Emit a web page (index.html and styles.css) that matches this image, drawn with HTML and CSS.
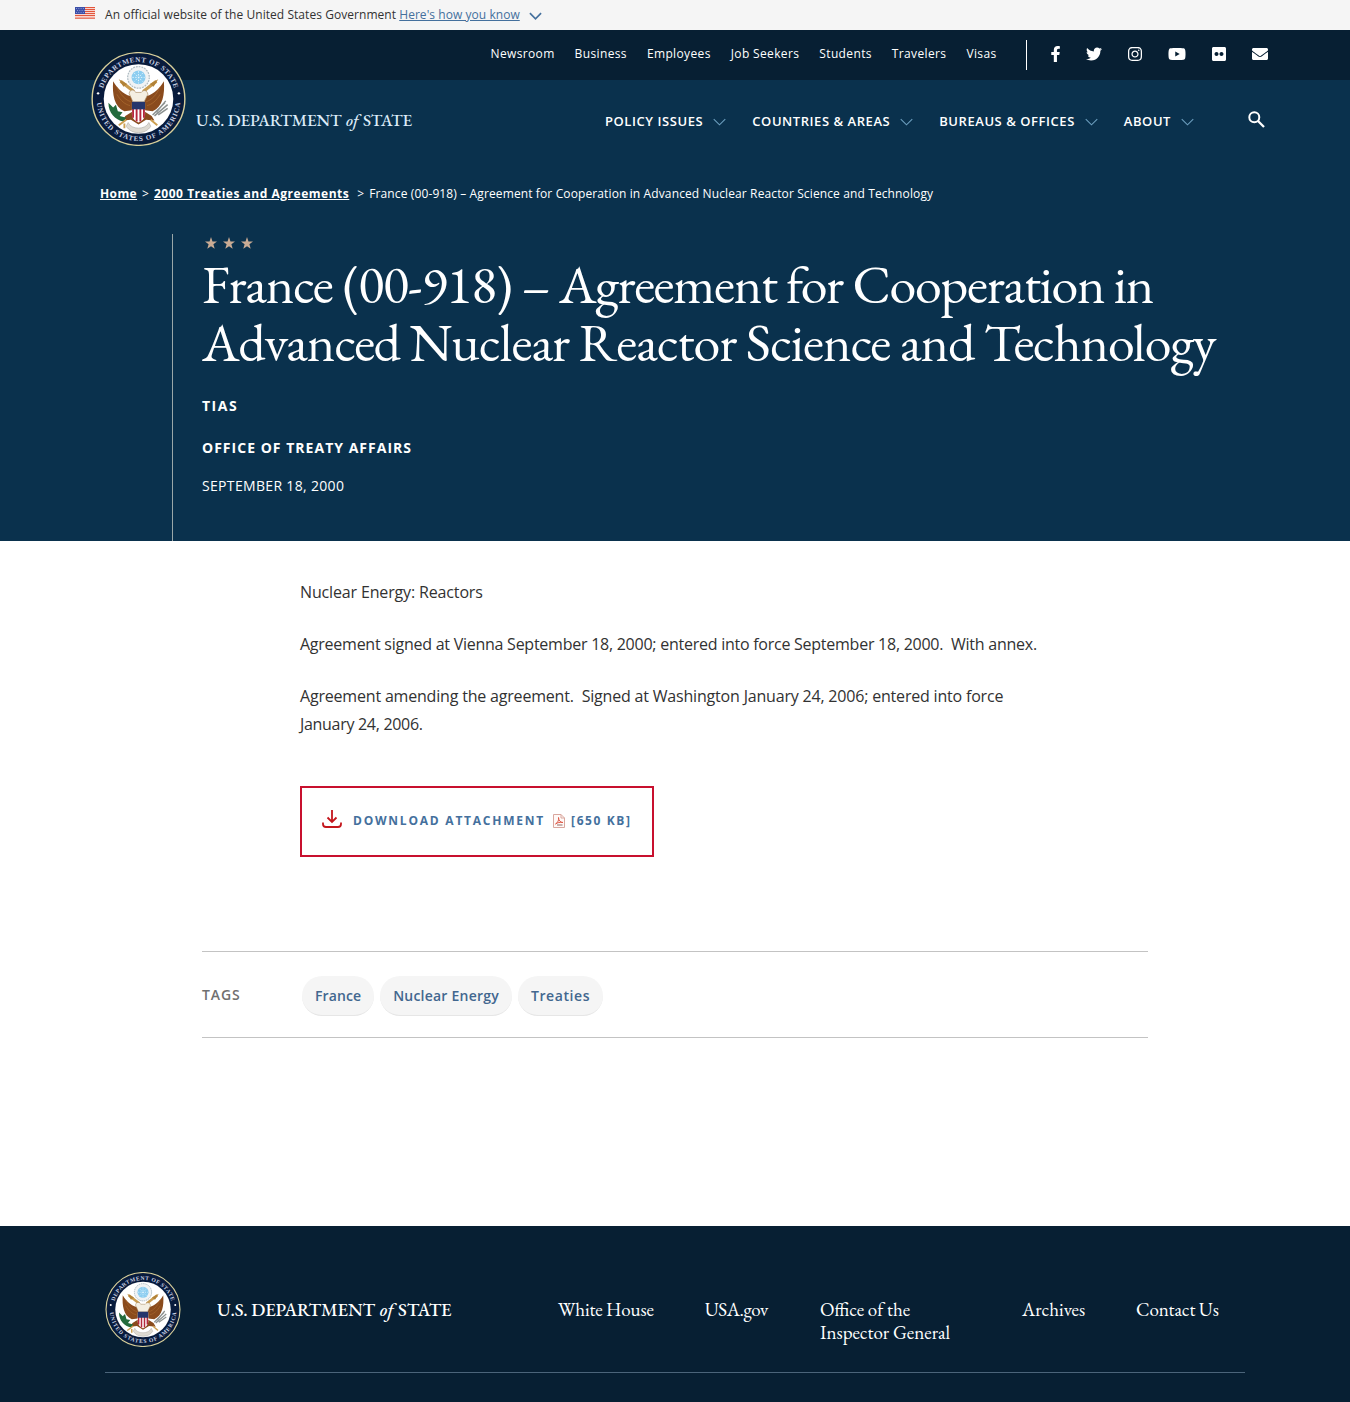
FILE: index.html
```html
<!DOCTYPE html>
<html lang="en">
<head>
<meta charset="utf-8">
<title>France (00-918) – Agreement for Cooperation in Advanced Nuclear Reactor Science and Technology</title>
<link rel="stylesheet" href="styles.css">
</head>
<body>
<svg class="sprite" aria-hidden="true">
  <defs>
    <path id="arc-top" d="M10.600 50A39.4 39.4 0 0 1 89.400 50"/>
    <path id="arc-bottom" d="M5.400 50A44.600 44.600 0 0 0 94.600 50"/>
    <symbol id="seal" viewBox="0 0 100 100">
      <circle cx="50" cy="50" r="49.3" fill="#081b3c" stroke="#d8cf9a" stroke-width="1.5"/>
      <circle cx="50" cy="50" r="37" fill="#fff"/>
      <text class="seal-text"><textPath href="#arc-top" startOffset="50%" text-anchor="middle" textLength="101">DEPARTMENT OF STATE</textPath></text>
      <text class="seal-text"><textPath href="#arc-bottom" startOffset="50%" text-anchor="middle" textLength="132">UNITED STATES OF AMERICA</textPath></text>
      <circle cx="7" cy="44" r="1.3" fill="#fff"/><circle cx="93" cy="44" r="1.3" fill="#fff"/>
      <circle cx="50" cy="27" r="11.5" fill="#f1f3f4" stroke="#aebbc2" stroke-width="1.3" stroke-dasharray="2 1"/>
      <circle cx="50" cy="27" r="7.4" fill="#8ccdf0"/>
      <path d="M50 20.500v13M43.500 27h13M45.500 22.500l9 9M54.500 22.500l-9 9" stroke="#e5f5fd" stroke-width="1" stroke-dasharray="1.500 1.500"/>
      <path d="M31 31l14 11M69 31L55 42" stroke="#c99c4f" stroke-width="3.400"/>
      <path d="M29 29l9 5-4 3zM71 29l-9 5 4 3z" fill="#b18238"/>
      <path d="M23 31C22 45 24 58 35 63l8-1 1-15c-7 0-16-7-21-16zM77 31c1 14 -1 27-12 32l-8-1-1-15c7 0 16-7 21-16z" fill="#8a4b1d"/>
      <path d="M27 37c4 9 9 14 15 16M27 45c4 7 9 11 14 12M73 37c-4 9-9 14-15 16M73 45c-4 7-9 11-14 12" fill="none" stroke="#a9692f" stroke-width=".8"/>
      <path d="M40 44c1-5 6-4 7-1h6c2-3 6-3 7 2l-4 8H44z" fill="#f4efe2" stroke="#a88b62" stroke-width=".7"/>
      <path d="M36 68l8-5h12l8 5 3 5-9-1-8 5-8-5-9 1z" fill="#8a4b1d"/>
      <path d="M18 54l5 5 3-3 2 7 5 1-3 4 7 2-3 4c-9-2-16-9-16-20z" fill="#236b3c"/>
      <path d="M65 67l13-13m-11 14l14-12m-12 8l10-12m-8 15l10-7" stroke="#8c9190" stroke-width="1.600"/>
      <path d="M37 72l-8 6M63 72l7 6M35 76v5" stroke="#cda052" stroke-width="2"/>
      <path d="M39 75c3 8 19 8 22 0l2 4c-5 9-21 9-26 0z" fill="#dedad2" stroke="#aaa69e" stroke-width=".6"/>
      <path d="M43 54h14v12c0 5-4 8-7 9-3-1-7-4-7-9z" fill="#fff"/>
      <path d="M44.200 60v10M48 60v14M52 60v14M55.800 60v10" stroke="#b5283c" stroke-width="2"/>
      <path d="M43 53h14v8H43z" fill="#25366c"/>
    </symbol>
    <symbol id="chevron" viewBox="0 0 14 8"><path d="M.8.8L7 7 13.200.8" fill="none" stroke="currentColor" stroke-width="1.200"/></symbol>
    <symbol id="star" viewBox="0 0 24 24"><path d="M12 0l3 8.800 9 .1-7.200 5.600 2.600 9.100L12 18.300 4.600 23.600l2.600-9.100L0 8.900l9-.1z" fill="currentColor"/></symbol>
  </defs>
</svg>

<div class="banner">
  <svg class="flag" viewBox="0 0 20 12">
    <path fill="#fff" d="M0 0h20v12H0z"/>
    <path d="M0 .5h20M0 2.500h20M0 4.500h20M0 6.500h20M0 8.500h20M0 11.200h20" stroke="#e2563c" stroke-width="1.250"/>
    <path fill="#3c4fa8" d="M0 0h10v7H0z"/>
    <path d="M1 1.500h9M2 3.500h8M1 5.500h9" stroke="#a9b3e4" stroke-width=".7" stroke-dasharray="1 1.300"/>
  </svg>
  <span class="banner-text">An official website of the United States Government <a href="#">Here's how you know</a></span>
  <svg class="banner-chevron" viewBox="0 0 14 8"><path d="M1 1l6 6 6-6" fill="none" stroke="#44709d" stroke-width="1.800"/></svg>
</div>

<header class="header">
  <div class="topbar">
    <nav class="topnav">
      <a href="#">Newsroom</a><a href="#">Business</a><a href="#">Employees</a><a href="#">Job Seekers</a><a href="#">Students</a><a href="#">Travelers</a><a href="#">Visas</a>
    </nav>
    <div class="social">
      <svg width="9" height="16" viewBox="22 0 272 512"><path d="M279.140 288l14.220-92.660h-88.910v-60.130c0-25.350 12.420-50.060 52.240-50.060h40.420V6.260S260.430 0 225.360 0c-73.220 0-121.080 44.380-121.080 124.720v70.620H22.890V288h81.390v224h100.170V288z"/></svg>
      <svg width="16" height="16" viewBox="0 0 512 512"><path d="M459.370 151.716c.325 4.548.325 9.097.325 13.645 0 138.720-105.583 298.558-298.558 298.558-59.452 0-114.680-17.219-161.137-47.106 8.447.974 16.568 1.299 25.340 1.299 49.055 0 94.213-16.568 130.274-44.832-46.132-.975-84.792-31.188-98.112-72.772 6.498.974 12.995 1.624 19.818 1.624 9.421 0 18.843-1.300 27.614-3.573-48.081-9.747-84.143-51.980-84.143-102.985v-1.299c13.969 7.797 30.214 12.670 47.431 13.319-28.264-18.843-46.781-51.005-46.781-87.391 0-19.492 5.197-37.360 14.294-52.954 51.655 63.675 129.300 105.258 216.365 109.807-1.624-7.797-2.599-15.918-2.599-24.040 0-57.828 46.782-104.934 104.934-104.934 30.213 0 57.502 12.670 76.670 33.137 23.715-4.548 46.456-13.320 66.599-25.340-7.798 24.366-24.366 44.833-46.132 57.827 21.117-2.273 41.584-8.122 60.426-16.243-14.292 20.791-32.161 39.308-52.628 54.253z"/></svg>
      <svg width="14" height="16" viewBox="0 0 448 512"><path d="M224.100 141c-63.600 0-114.900 51.300-114.900 114.900s51.300 114.900 114.900 114.900S339 319.500 339 255.900 287.700 141 224.100 141zm0 189.600c-41.100 0-74.700-33.500-74.700-74.700s33.500-74.700 74.700-74.700 74.700 33.500 74.700 74.700-33.600 74.700-74.700 74.700zm146.400-194.300c0 14.900-12 26.800-26.800 26.800-14.900 0-26.800-12-26.800-26.800s12-26.800 26.800-26.800 26.800 12 26.800 26.800zm76.100 27.200c-1.700-35.900-9.900-67.700-36.200-93.900-26.200-26.200-58-34.400-93.900-36.200-37-2.100-147.900-2.100-184.900 0-35.800 1.700-67.600 9.900-93.900 36.100s-34.400 58-36.200 93.900c-2.100 37-2.100 147.900 0 184.900 1.700 35.900 9.900 67.700 36.200 93.900s58 34.400 93.900 36.200c37 2.100 147.900 2.100 184.900 0 35.900-1.700 67.700-9.900 93.900-36.200 26.200-26.200 34.400-58 36.200-93.900 2.100-37 2.100-147.800 0-184.800zM398.800 388c-7.800 19.600-22.900 34.700-42.600 42.600-29.500 11.700-99.500 9-132.100 9s-102.700 2.600-132.100-9c-19.600-7.800-34.700-22.900-42.600-42.600-11.700-29.500-9-99.500-9-132.100s-2.600-102.700 9-132.100c7.800-19.600 22.900-34.700 42.600-42.600 29.500-11.700 99.500-9 132.100-9s102.700-2.600 132.100 9c19.600 7.800 34.700 22.900 42.600 42.600 11.700 29.500 9 99.500 9 132.100s2.700 102.700-9 132.100z"/></svg>
      <svg width="18" height="16" viewBox="0 0 576 512"><path d="M549.655 124.083c-6.281-23.650-24.787-42.276-48.284-48.597C458.781 64 288 64 288 64S117.220 64 74.629 75.486c-23.497 6.322-42.003 24.947-48.284 48.597-11.412 42.867-11.412 132.305-11.412 132.305s0 89.438 11.412 132.305c6.281 23.650 24.787 41.500 48.284 47.821C117.220 448 288 448 288 448s170.780 0 213.371-11.486c23.497-6.321 42.003-24.171 48.284-47.821 11.412-42.867 11.412-132.305 11.412-132.305s0-89.438-11.412-132.305zm-317.510 213.508V175.185l142.739 81.205-142.739 81.201z"/></svg>
      <svg width="14" height="16" viewBox="0 0 448 512"><path d="M400 32H48C21.500 32 0 53.500 0 80v352c0 26.500 21.500 48 48 48h352c26.500 0 48-21.500 48-48V80c0-26.500-21.500-48-48-48zM144.500 319c-35.100 0-63.500-28.400-63.500-63.500s28.400-63.500 63.500-63.500 63.500 28.400 63.500 63.500-28.400 63.500-63.500 63.500zm159 0c-35.100 0-63.500-28.400-63.500-63.500s28.400-63.500 63.500-63.500 63.500 28.400 63.500 63.500-28.400 63.500-63.500 63.500z"/></svg>
      <svg width="16" height="16" viewBox="0 0 512 512"><path d="M502.300 190.800c3.900-3.100 9.700-.2 9.700 4.700V400c0 26.500-21.500 48-48 48H48c-26.500 0-48-21.500-48-48V195.600c0-5 5.700-7.800 9.700-4.700 22.400 17.400 52.100 39.500 154.100 113.600 21.100 15.400 56.700 47.800 92.200 47.600 35.700.3 72-32.800 92.300-47.600 102-74.100 131.600-96.300 154-113.700zM256 320c23.200.4 56.600-29.200 73.400-41.400 132.700-96.300 142.800-104.700 173.400-128.700 5.800-4.500 9.200-11.500 9.200-18.900v-19c0-26.500-21.500-48-48-48H48c-26.500 0-48 21.500-48 48v19c0 7.400 3.400 14.300 9.200 18.900 30.600 23.900 40.700 32.400 173.400 128.700 16.800 12.200 50.200 41.800 73.400 41.400z"/></svg>
    </div>
  </div>

  <div class="mainbar">
    <a class="logo" href="#">
      <svg class="logo-seal"><use href="#seal"/></svg>
      <span class="wordmark">U.S. DEPARTMENT <i>of</i> STATE</span>
    </a>
    <nav class="mainnav">
      <a class="nav-policy" href="#">POLICY ISSUES <svg><use href="#chevron"/></svg></a>
      <a href="#">COUNTRIES &amp; AREAS <svg><use href="#chevron"/></svg></a>
      <a href="#">BUREAUS &amp; OFFICES <svg><use href="#chevron"/></svg></a>
      <a href="#">ABOUT <svg><use href="#chevron"/></svg></a>
    </nav>
    <svg class="search" viewBox="0 0 17 17"><circle cx="6.300" cy="6.300" r="5" fill="none" stroke="#fff" stroke-width="2"/><path d="M10 10l6 6" stroke="#fff" stroke-width="2.300"/></svg>
  </div>

  <div class="breadcrumb">
    <a class="crumb-home" href="#">Home</a><span class="sep">&gt;</span><a class="crumb-parent" href="#">2000 Treaties and Agreements</a><span class="sep sep-last">&gt;</span><span class="crumb-current">France (00-918) – Agreement for Cooperation in Advanced Nuclear Reactor Science and Technology</span>
  </div>

  <div class="hero">
    <div class="stars"><svg><use href="#star"/></svg><svg><use href="#star"/></svg><svg><use href="#star"/></svg></div>
    <h1><span class="line-a">France (00-918) <span class="title-rest">– Agreement for Cooperation in</span></span> <span class="line-b">Advanced Nuclear Reactor Science and Technology</span></h1>
    <p class="kind">TIAS</p>
    <p class="office">OFFICE OF TREATY AFFAIRS</p>
    <p class="date">SEPTEMBER 18, 2000</p>
  </div>
</header>

<main>
  <article class="entry">
    <p class="subject">Nuclear Energy: Reactors</p>
    <p class="signed">Agreement signed at Vienna September 18, 2000; entered into force September 18, 2000.&nbsp; With annex.</p>
    <p class="amended">Agreement amending the agreement.&nbsp; Signed at Washington January 24, 2006; entered into force<br><span class="amended-end">January 24, 2006.</span></p>
    <a class="download" href="#">
      <svg class="download-icon" viewBox="0 0 20 18"><path d="M10 0v11.500M5.500 7.500L10 12l4.500-4.500M1 12.500V14q0 3 3 3h12q3 0 3-3v-1.500" fill="none" stroke="#c4161c" stroke-width="1.800"/></svg>
      <span class="download-label">DOWNLOAD ATTACHMENT</span>
      <svg class="pdf" viewBox="0 0 12 14"><path d="M.5.500h7.500l3.500 3.500v9.500H.5z" fill="#fff9f7" stroke="#d9a79e"/><path d="M8 .5V4h3.500" fill="none" stroke="#d9a79e"/><path d="M2.500 10C5 8.500 6 6 5.500 3.500 5.500 6.500 7.500 8.500 10 8.500 7 8 4.500 8.500 2.500 10z" fill="none" stroke="#df5a48"/><path d="M4 11h5.500" stroke="#8f6d68"/></svg>
      <span class="download-size">[650 KB]</span>
    </a>
  </article>
  <section class="tags">
    <h2>TAGS</h2>
    <div class="tag-list"><a class="tag-france" href="#">France</a><a class="tag-nuclear" href="#">Nuclear Energy</a><a class="tag-treaties" href="#">Treaties</a></div>
  </section>
</main>

<footer>
  <div class="footer-row">
    <svg class="footer-seal"><use href="#seal"/></svg>
    <span class="wordmark">U.S. DEPARTMENT <i>of</i> STATE</span>
    <nav class="footer-nav">
      <a class="f-wh" href="#">White House</a>
      <a class="f-usa" href="#">USA.gov</a>
      <a class="f-oig" href="#">Office of the<br>Inspector General</a>
      <a class="f-arc" href="#">Archives</a>
      <a class="f-con" href="#">Contact Us</a>
    </nav>
  </div>
</footer>
</body>
</html>
```
FILE: styles.css
```css
* { box-sizing: border-box; }
body { margin: 0; background: #fff; font-family: "Open Sans", sans-serif; color: #323232; }
a { color: inherit; text-decoration: none; }
p, h1, h2 { margin: 0; }
svg { display: block; flex: none; }
.sprite { width: 0; height: 0; position: absolute; }
.seal-text { font: 700 7.500px "Liberation Serif", serif; fill: #c9d2e4; }

.banner { height: 30px; padding: 0 75px; display: flex; align-items: flex-start; background: #f5f5f5; font-size: 12px; line-height: 16px; letter-spacing: .05px; }
.flag { width: 20px; height: 12px; margin: 7px 10px 0 0; }
.banner-text { margin-top: 7px; white-space: nowrap; }
.banner-text a { color: #44709d; text-decoration: underline; }
.banner-chevron { width: 13px; height: 8px; margin: 12px 0 0 9px; }

.header { height: 511px; background: #0a314d; color: #fff; display: flex; flex-direction: column; }
.topbar { height: 50px; flex: none; background: #071f33; display: flex; justify-content: flex-end; align-items: flex-start; padding: 10px 82px 0 0; }
.topnav { display: flex; gap: 20px; padding-right: 29.500px; font-size: 12px; line-height: 16px; letter-spacing: .36px; margin-top: 6px; }
.social { height: 30px; border-left: 1px solid #fff; display: flex; gap: 26px; align-items: flex-start; padding: 6px 0 0 24px; }
.social svg { fill: #fff; }

.mainbar { height: 92px; flex: none; display: flex; align-items: flex-start; padding: 0 85px 0 91px; }
.logo { display: flex; align-items: flex-start; margin-top: -28px; }
.logo-seal { width: 95px; height: 94px; }
.wordmark { font-family: "EB Garamond", "Liberation Serif", serif; white-space: nowrap; font-weight: 500; }
.wordmark i { margin: 0 1px 0 1px; }
.logo .wordmark { font-size: 17px; line-height: 24px; margin: 56px 0 0 10px; letter-spacing: -.13px; color: #dcebf8; }
.mainnav { display: flex; gap: 26px; margin: 32px 54px 0 auto; font-size: 13px; font-weight: 600; line-height: 18px; letter-spacing: .55px; }
.mainnav a { display: flex; gap: 10px; white-space: nowrap; }
.mainnav .nav-policy { letter-spacing: .58px; }
.mainnav svg { width: 13px; height: 8px; margin-top: 6px; color: #6b9dbd; }
.search { width: 17px; height: 17px; margin-top: 31px; }

.breadcrumb { height: 62px; flex: none; padding: 14px 100px 0; display: flex; font-size: 12px; line-height: 16px; white-space: nowrap; }
.breadcrumb a { font-weight: 700; text-decoration: underline; }
.crumb-home { letter-spacing: .4px; }
.crumb-parent { letter-spacing: .52px; }
.crumb-current { letter-spacing: .12px; }
.sep { margin: 0 5px; }
.sep-last { margin-left: 8px; }

.hero { flex: 1; margin-left: 172px; border-left: 1px solid #9aa7a8; padding-left: 29px; }
.stars { display: flex; gap: 6px; padding: 3px 0 0 3px; color: #c9ab94; }
.stars svg { width: 12px; height: 12px; }
h1 { margin-top: 6px; font: 400 54px/58px "EB Garamond", "Liberation Serif", serif; white-space: nowrap; }
.line-a, .line-b { display: block; }
.line-a { letter-spacing: -1.160px; }
.title-rest { letter-spacing: -1.280px; }
.line-b { letter-spacing: -1.060px; }
.kind { margin-top: 25px; font-size: 14px; line-height: 20px; font-weight: 700; letter-spacing: 1.500px; }
.office { margin-top: 22px; font-size: 14px; line-height: 20px; font-weight: 700; letter-spacing: 1.020px; }
.date { margin-top: 18px; font-size: 14px; line-height: 20px; letter-spacing: .33px; }

.entry { margin: 37px 0 0 300px; width: 750px; display: flex; flex-direction: column; align-items: flex-start; font-size: 16px; line-height: 28px; letter-spacing: -.3px; white-space: nowrap; }
.entry p { margin-bottom: 24px; }
.subject { letter-spacing: -.15px; }
.signed { letter-spacing: -.25px; }
.amended { letter-spacing: -.19px; }
.amended-end { letter-spacing: -.3px; }
.download { width: 354px; height: 71px; margin-top: 24px; border: 2px solid #c8102e; padding: 23px 0 0 20px; display: flex; align-items: flex-start; color: #44709d; font-size: 12px; line-height: 20px; font-weight: 700; letter-spacing: 1.600px; }
.download-icon { width: 20px; height: 18px; margin-right: 11px; margin-top: -1px; }
.download-label { letter-spacing: 1.770px; }
.pdf { width: 12px; height: 14px; margin: 3px 6px 0 8px; }

.tags { margin: 94px 202px 188px; height: 87px; border: solid #c3c3c3; border-width: 1px 0; display: flex; align-items: flex-start; }
.tags h2 { width: 100px; margin-top: 33px; font-size: 14px; line-height: 20px; font-weight: 600; letter-spacing: .9px; color: #707070; }
.tag-list { display: flex; gap: 6px; margin-top: 24px; }
.tag-list a { height: 40px; padding: 10px 13px; border-radius: 20px; background: #f5f5f5; border-bottom: 1px solid #e6e6e6; font-size: 14px; line-height: 20px; font-weight: 600; color: #42678f; white-space: nowrap; }
.tag-france { letter-spacing: .1px; }
.tag-nuclear { letter-spacing: .22px; }
.tag-treaties { letter-spacing: .6px; }

footer { height: 176px; background: #071f33; color: #fff; padding: 46px 105px 0; }
.footer-row { height: 101px; border-bottom: 1px solid #4b647a; display: flex; align-items: flex-start; }
.footer-seal { width: 76px; height: 75px; }
.footer-row .wordmark { width: 341px; margin: 26px 0 0 36px; font-size: 18.500px; line-height: 24px; letter-spacing: -.16px; }
.footer-nav { display: flex; gap: 51px; margin-top: 26px; font: 19px/23px "EB Garamond", "Liberation Serif", serif; white-space: nowrap; }
.f-wh { letter-spacing: -.15px; }
.f-usa { letter-spacing: -.4px; margin-right: 1px; }
.f-oig { width: 151px; }
.f-con { letter-spacing: -.15px; }
```
